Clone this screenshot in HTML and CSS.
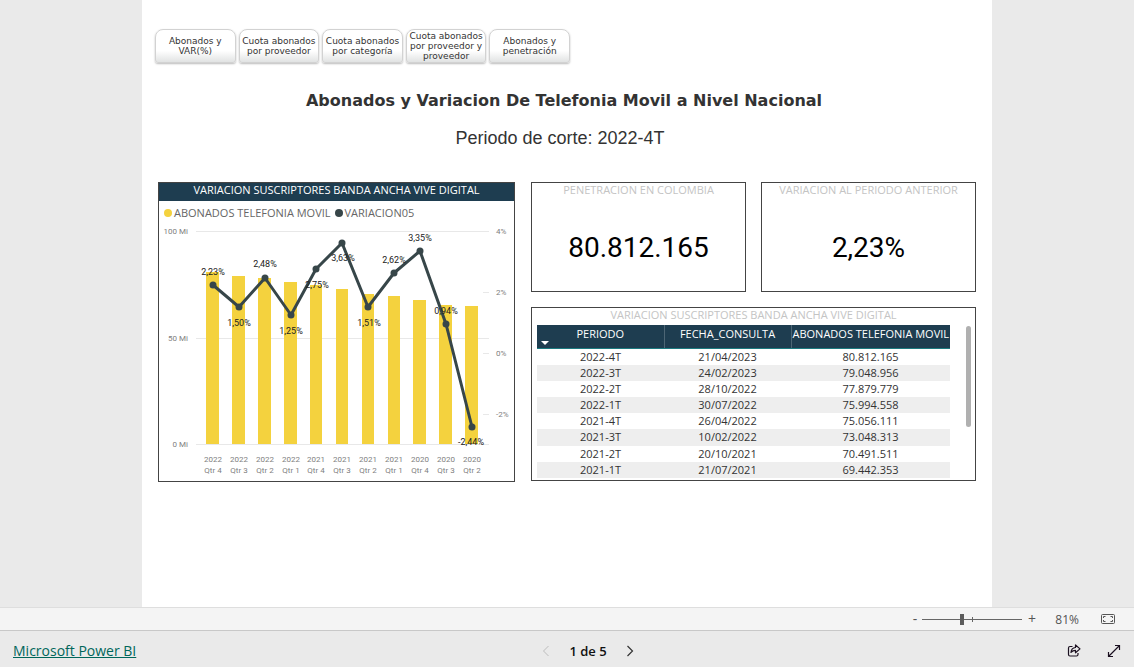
FILE: index.html
```html
<!DOCTYPE html>
<html lang="es">
<head>
<meta charset="utf-8">
<meta name="viewport" content="width=device-width, initial-scale=1">
<title>Abonados y Variacion De Telefonia Movil</title>
<link rel="stylesheet" href="styles.css">
</head>
<body>
<div class="viewer">
  <main class="report">
    <nav class="tabs" aria-label="Secciones">
      <button class="tab" type="button">Abonados y VAR(%)</button>
      <button class="tab" type="button">Cuota abonados por proveedor</button>
      <button class="tab" type="button">Cuota abonados por categoría</button>
      <button class="tab" type="button">Cuota abonados por proveedor y proveedor</button>
      <button class="tab" type="button">Abonados y penetración</button>
    </nav>
    <h1 class="title">Abonados y Variacion De Telefonia Movil a Nivel Nacional</h1>
    <p class="period">Periodo de corte: 2022-4T</p>

    <div class="dashboard">
      <section class="panel chart-panel">
        <h2 class="panel-title panel-title-dark">VARIACION SUSCRIPTORES BANDA ANCHA VIVE DIGITAL</h2>
        <ul class="legend">
          <li class="legend-item"><span class="dot dot-yellow"></span>ABONADOS TELEFONIA MOVIL</li>
          <li class="legend-item"><span class="dot dot-dark"></span>VARIACION05</li>
        </ul>
        <svg class="chart" viewBox="0 0 355 259" role="img" aria-label="Abonados y variación por trimestre">
          <path class="grid" d="M37 9.5H325M37 116.5H325M37 222.5H325M324 9.5h6M324 70.5h6M324 131.5h6M324 192.5h6M324 116.5h6M324 222.5h6"/>
          <g class="bars">
            <rect x="47" y="50" width="13" height="172"/>
            <rect x="73" y="54" width="13" height="168"/>
            <rect x="99" y="56" width="13" height="166"/>
            <rect x="125" y="60" width="13" height="162"/>
            <rect x="151" y="63" width="12" height="159"/>
            <rect x="177" y="67" width="12" height="155"/>
            <rect x="203" y="72" width="12" height="150"/>
            <rect x="229" y="74" width="12" height="148"/>
            <rect x="254" y="78" width="13" height="144"/>
            <rect x="280" y="83" width="13" height="139"/>
            <rect x="306" y="84" width="13" height="138"/>
          </g>
          <polyline class="line" points="54,63 80,85 106,56 132,93 157,47 183,21 209,85 235,51 261,29 287,102 313,205"/>
          <g class="points">
            <circle cx="54" cy="63" r="3.5"/><circle cx="80" cy="85" r="3.5"/><circle cx="106" cy="56" r="3.5"/><circle cx="132" cy="93" r="3.5"/><circle cx="157" cy="47" r="3.5"/><circle cx="183" cy="21" r="3.5"/><circle cx="209" cy="85" r="3.5"/><circle cx="235" cy="51" r="3.5"/><circle cx="261" cy="29" r="3.5"/><circle cx="287" cy="102" r="3.5"/><circle cx="313" cy="205" r="3.5"/>
          </g>
          <g class="values">
            <text x="54" y="53">2,23%</text><text x="80" y="104">1,50%</text><text x="106" y="45">2,48%</text><text x="132" y="112">1,25%</text><text x="158" y="66">2,75%</text><text x="184" y="39">3,63%</text><text x="210" y="104">1,51%</text><text x="235" y="41">2,62%</text><text x="261" y="19">3,35%</text><text x="287" y="92">0,94%</text><text x="312" y="223">-2,44%</text>
          </g>
          <g class="axis axis-left">
            <text x="29" y="12">100 Mi</text><text x="29" y="119">50 Mi</text><text x="29" y="225">0 Mi</text>
          </g>
          <g class="axis axis-right">
            <text x="337" y="12">4%</text><text x="337" y="73">2%</text><text x="337" y="134">0%</text><text x="337" y="195">-2%</text>
          </g>
          <g class="axis axis-bottom">
            <text x="54" y="240">2022</text><text x="54" y="251">Qtr 4</text>
            <text x="80" y="240">2022</text><text x="80" y="251">Qtr 3</text>
            <text x="106" y="240">2022</text><text x="106" y="251">Qtr 2</text>
            <text x="132" y="240">2022</text><text x="132" y="251">Qtr 1</text>
            <text x="157" y="240">2021</text><text x="157" y="251">Qtr 4</text>
            <text x="183" y="240">2021</text><text x="183" y="251">Qtr 3</text>
            <text x="209" y="240">2021</text><text x="209" y="251">Qtr 2</text>
            <text x="235" y="240">2021</text><text x="235" y="251">Qtr 1</text>
            <text x="261" y="240">2020</text><text x="261" y="251">Qtr 4</text>
            <text x="287" y="240">2020</text><text x="287" y="251">Qtr 3</text>
            <text x="313" y="240">2020</text><text x="313" y="251">Qtr 2</text>
          </g>
        </svg>
      </section>

      <div class="side">
        <div class="cards">
          <section class="panel card">
            <h2 class="panel-title">PENETRACION EN COLOMBIA</h2>
            <p class="figure">80.812.165</p>
          </section>
          <section class="panel card">
            <h2 class="panel-title">VARIACION AL PERIODO ANTERIOR</h2>
            <p class="figure">2,23%</p>
          </section>
        </div>
        <section class="panel table-panel">
          <h2 class="panel-title">VARIACION SUSCRIPTORES BANDA ANCHA VIVE DIGITAL</h2>
          <div class="table-area">
            <table class="data">
              <colgroup><col class="col-period"><col class="col-date"><col class="col-total"></colgroup>
              <thead>
                <tr>
                  <th scope="col" aria-sort="descending">PERIODO<span class="sort"></span></th>
                  <th scope="col">FECHA_CONSULTA</th>
                  <th scope="col">ABONADOS TELEFONIA MOVIL</th>
                </tr>
              </thead>
              <tbody>
                <tr><td>2022-4T</td><td>21/04/2023</td><td>80.812.165</td></tr>
                <tr><td>2022-3T</td><td>24/02/2023</td><td>79.048.956</td></tr>
                <tr><td>2022-2T</td><td>28/10/2022</td><td>77.879.779</td></tr>
                <tr><td>2022-1T</td><td>30/07/2022</td><td>75.994.558</td></tr>
                <tr><td>2021-4T</td><td>26/04/2022</td><td>75.056.111</td></tr>
                <tr><td>2021-3T</td><td>10/02/2022</td><td>73.048.313</td></tr>
                <tr><td>2021-2T</td><td>20/10/2021</td><td>70.491.511</td></tr>
                <tr><td>2021-1T</td><td>21/07/2021</td><td>69.442.353</td></tr>
              </tbody>
            </table>
            <div class="scrollbar"></div>
          </div>
        </section>
      </div>
    </div>
  </main>

  <div class="zoombar">
    <button class="zoom-step" type="button" aria-label="Alejar">-</button>
    <input class="zoom-range" type="range" min="0" max="100" value="40" aria-label="Zoom">
    <button class="zoom-step" type="button" aria-label="Acercar">+</button>
    <span class="zoom-value">81%</span>
    <button class="icon-button" type="button" aria-label="Ajustar a la página">
      <svg width="16" height="12" viewBox="0 0 16 12" fill="none" stroke="#555">
        <rect x="1.5" y="1.5" width="13" height="9" rx="1"/>
        <path d="M3.500 5V3.500H5.500M3.500 7v1.500H5.500M12.500 5V3.500H10.500M12.500 7v1.500H10.500"/>
      </svg>
    </button>
  </div>

  <footer class="footer">
    <a class="brand" href="#">Microsoft Power BI</a>
    <div class="pager">
      <button class="icon-button" type="button" aria-label="Página anterior" disabled>
        <svg width="8" height="12" viewBox="0 0 8 12" fill="none" stroke="#bdbdbd"><path d="M6.500 1 1.500 6l5 5"/></svg>
      </button>
      <span class="pager-label">1 de 5</span>
      <button class="icon-button" type="button" aria-label="Página siguiente">
        <svg width="8" height="12" viewBox="0 0 8 12" fill="none" stroke="#333" stroke-width="1.200"><path d="M1.500 1 6.500 6l-5 5"/></svg>
      </button>
    </div>
    <div class="actions">
      <button class="icon-button" type="button" aria-label="Compartir">
        <svg width="14" height="14" viewBox="0 0 14 14" fill="none" stroke="#1b1020" stroke-width="1.200" stroke-linejoin="round">
          <path d="M5.500 2.500H3A1.500 1.500 0 0 0 1.500 4v6.500A1.500 1.500 0 0 0 3 12h6.500A1.500 1.500 0 0 0 11 10.500V9"/>
          <path d="M8.500 1v2.500C5.500 3.800 4.200 5.600 4 8.500 5.200 7 6.500 6.400 8.500 6.400v2.400L13 4.900Z"/>
        </svg>
      </button>
      <button class="icon-button" type="button" aria-label="Pantalla completa">
        <svg width="14" height="14" viewBox="0 0 14 14" fill="none" stroke="#1b1020" stroke-width="1.200"><path d="M1.500 12.500 12.500 1.500M8 1.500h4.500V6M1.500 8v4.500H6"/></svg>
      </button>
    </div>
  </footer>
</div>
</body>
</html>
```
FILE: styles.css
```css
* { box-sizing: border-box; }

body {
  margin: 0;
  background: #eaeaea;
  color: #333;
  font-family: "Open Sans", "Noto Sans", sans-serif;
  font-size: 11px;
}

h1, h2, p, ul { margin: 0; padding: 0; font-weight: 400; }
button { font: inherit; color: inherit; padding: 0; border: 0; background: none; }

.viewer { display: flex; flex-direction: column; min-height: 100vh; }

.report {
  flex: 1;
  width: 100%;
  max-width: 850px;
  margin: 0 auto;
  padding: 29px 16px 24px;
  background: #fff;
}

.tabs {
  display: grid;
  grid-template-columns: repeat(5, 1fr);
  gap: 3px;
  max-width: 415px;
  margin-left: -3px;
}
.tab {
  height: 34px;
  border: 1px solid #d2d2d2;
  border-radius: 8px 8px 3px 3px;
  background: linear-gradient(#fff 65%, #e1e3e3);
  box-shadow: 0 1px 2px #bbb;
  color: #333;
  font-family: "DejaVu Sans", Verdana, sans-serif;
  font-size: 9px;
  line-height: 10px;
}

.title {
  margin-top: 28px;
  padding-right: 6px;
  color: #333;
  text-align: center;
  font: 700 16px/20px "DejaVu Sans", Verdana, sans-serif;
}
.period {
  margin-top: 17px;
  padding-right: 14px;
  text-align: center;
  font: 18px/20px "Liberation Sans", Arial, sans-serif;
}

.dashboard {
  display: grid;
  grid-template-columns: 357fr 445fr;
  align-items: start;
  gap: 16px;
  margin-top: 34px;
}
.panel { border: 1px solid #444; background: #fff; }
.panel-title {
  padding-bottom: 2px;
  color: #c4c4c4;
  text-align: center;
  font-size: 11px;
  line-height: 14px;
}
.panel-title-dark {
  padding-bottom: 4px;
  background: #1e3d50;
  color: #fff;
}

.legend { display: flex; gap: 4px; padding: 4px 5px 1px; list-style: none; color: #666; line-height: 16px; }
.legend-item { display: flex; align-items: center; gap: 2px; }
.dot { width: 8px; height: 8px; border-radius: 50%; }
.dot-yellow { background: #f4d23e; }
.dot-dark { background: #374649; }

.chart { display: block; width: 100%; height: auto; font-family: Roboto, sans-serif; }
.grid { stroke: #e8e8e8; fill: none; }
.bars { fill: #f4d23e; }
.line { fill: none; stroke: #374649; stroke-width: 3; stroke-linejoin: round; }
.points { fill: #374649; }
.values { fill: #222; font-size: 9px; text-anchor: middle; }
.axis { fill: #808080; font-size: 8px; }
.axis-left { text-anchor: end; }
.axis-bottom { text-anchor: middle; }

.side { display: grid; gap: 15px; min-width: 0; }
.cards { display: grid; grid-template-columns: 1fr 1fr; gap: 15px; }
.card { min-height: 110px; }
.figure {
  margin-top: 33px;
  color: #000;
  text-align: center;
  font: 28px/32px Roboto, sans-serif;
}

.table-panel { padding-bottom: 2px; }
.table-area { display: flex; gap: 16px; padding: 1px 4px 0 5px; }
.data {
  flex: 1;
  height: 153px;
  border-collapse: collapse;
  table-layout: fixed;
  text-align: center;
  line-height: 16px;
}
.col-period, .col-date { width: 127px; }
.data th {
  position: relative;
  height: 23px;
  padding: 0 0 5px;
  border-bottom: 1px solid #1b7a80;
  background: #1e3d50;
  color: #fff;
  font-weight: 400;
  white-space: nowrap;
}
.data th + th { border-left: 1px solid #4d6675; }
.data td { padding: 0; }
.data tbody tr:nth-child(even) { background: #eee; }
.sort {
  position: absolute;
  left: 4px;
  bottom: 3px;
  border: 4px solid transparent;
  border-top-color: #fff;
  border-bottom: 0;
}
.scrollbar { width: 5px; height: 101px; margin-top: 1px; border-radius: 3px; background: #b0b0b0; }

.zoombar {
  display: flex;
  align-items: center;
  justify-content: flex-end;
  height: 24px;
  padding-right: 18px;
  border-top: 1px solid #dedede;
  border-bottom: 1px solid #c8c8c8;
  background: #f4f4f4;
  color: #555;
}
.zoom-step { width: 14px; font-size: 14px; line-height: 16px; }
.zoom-range {
  appearance: none;
  width: 100px;
  height: 12px;
  margin: 0 3px 0 0;
  background:
    linear-gradient(#666, #666) 50% 50% / 1px 5px no-repeat,
    linear-gradient(#666, #666) 50% 50% / 100% 1px no-repeat;
}
.zoom-range::-webkit-slider-thumb { appearance: none; width: 4px; height: 11px; background: #5c5c5c; }
.zoom-value { width: 40px; margin-right: 21px; text-align: right; font-size: 12px; }
.icon-button { display: flex; align-items: center; }

.footer {
  display: grid;
  grid-template-columns: 1fr auto 1fr;
  align-items: center;
  height: 36px;
  padding: 3px 13px 0;
}
.brand { justify-self: start; color: #00665a; font-size: 14px; line-height: 20px; }
.pager { display: flex; align-items: center; gap: 19px; margin-right: -42px; }
.pager-label { color: #111; font-size: 13px; font-weight: 600; }
.actions { display: flex; justify-content: flex-end; gap: 26px; }
```
